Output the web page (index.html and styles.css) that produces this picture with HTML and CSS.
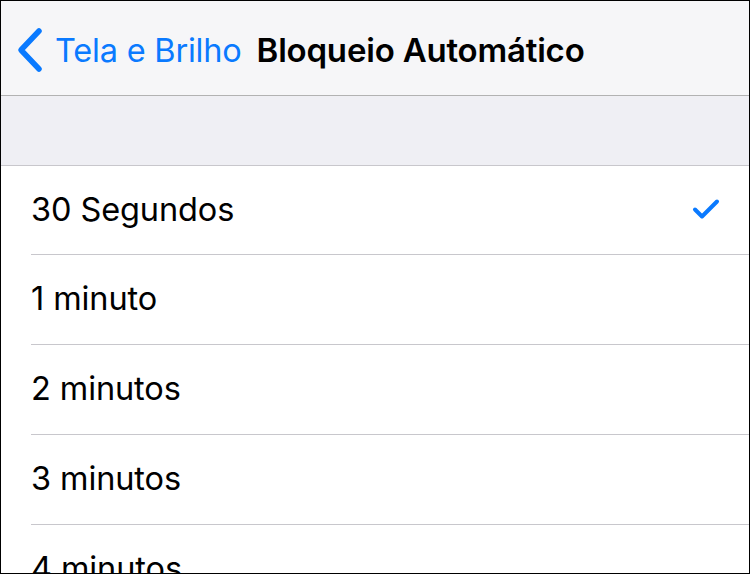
FILE: index.html
```html
<!DOCTYPE html>
<html lang="pt">
<head>
<meta charset="utf-8">
<link rel="stylesheet" href="styles.css">
</head>
<body>
<div class="screen">
  <header class="navbar">
    <div class="back">
      <svg class="chevron" width="28" height="46" viewBox="0 0 28 46"><path d="M24 4 L6 23 L24 42" fill="none" stroke="#0a7aff" stroke-width="5.5" stroke-linecap="round" stroke-linejoin="round"/></svg>
      <span class="back-label">Tela e Brilho</span>
    </div>
    <h1 class="title">Bloqueio Automático</h1>
  </header>
  <div class="group-gap"></div>
  <ul class="list">
    <li class="row"><span class="label">30 Segundos</span><svg class="check" width="28" height="22" viewBox="0 0 28 22"><path d="M3 11.5 L10 18.5 L25 3.5" fill="none" stroke="#0a7aff" stroke-width="4" stroke-linecap="round" stroke-linejoin="round"/></svg></li>
    <li class="row"><span class="label">1 minuto</span></li>
    <li class="row"><span class="label">2 minutos</span></li>
    <li class="row"><span class="label">3 minutos</span></li>
    <li class="row"><span class="label">4 minutos</span></li>
  </ul>
</div>
</body>
</html>
```
FILE: styles.css
```css
* { box-sizing: border-box; }
html, body { margin: 0; padding: 0; background: #fff; }
.screen {
  width: 750px;
  height: 574px;
  border: 1px solid #000;
  overflow: hidden;
  background: #fff;
  font-family: Inter, "Noto Sans", sans-serif;
  color: #000;
}
.navbar {
  height: 95px;
  background: #f6f6f8;
  border-bottom: 1px solid #b2b2b2;
  display: flex;
  align-items: center;
  padding-left: 14px;
  padding-top: 4px;
}
.back {
  display: flex;
  align-items: center;
  gap: 12px;
}
.chevron { display: block; }
.back-label {
  color: #0a7aff;
  font-size: 32.5px;
  letter-spacing: -0.2px;
}
.title {
  margin: 0 0 0 15px;
  font-size: 33px;
  font-weight: 600;
  letter-spacing: -0.2px;
}
.group-gap {
  height: 70px;
  background: #efeff4;
  border-bottom: 1px solid #c8c7cc;
}
.list { list-style: none; margin: 0; padding: 0 0 0 30px; }
.row {
  height: 90px;
  display: flex;
  align-items: center;
  justify-content: space-between;
  border-bottom: 1px solid #c8c7cc;
  padding-right: 29px;
  padding-bottom: 2px;
}
.row:first-child { height: 89px; }
.label {
  font-size: 32.5px;
  letter-spacing: -0.1px;
}
.check { display: block; }
```
